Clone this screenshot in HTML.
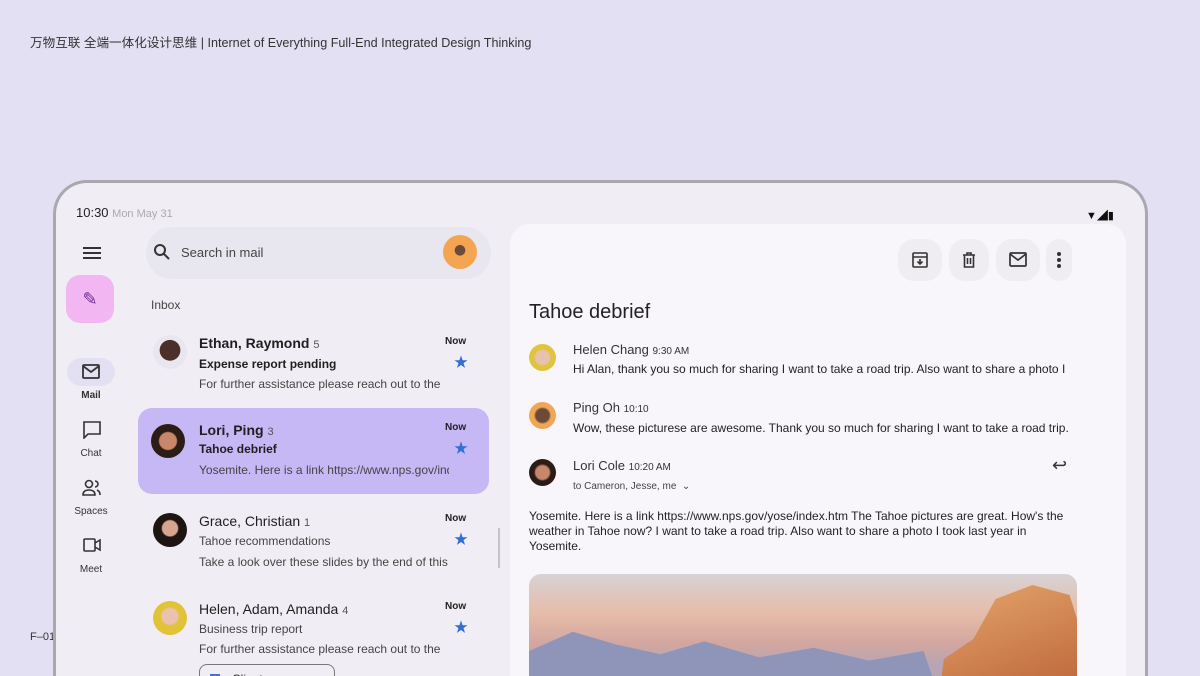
<!DOCTYPE html>
<html><head><meta charset="utf-8"><style>
*{margin:0;padding:0;box-sizing:border-box}
html{width:1200px;height:676px;overflow:hidden}
body{width:1200px;height:676px;overflow:hidden;background:#e4e0f3;font-family:"Liberation Sans","Noto Sans CJK SC",sans-serif;position:relative;color:#1f1f1f}
.a{position:absolute}
.hdr{left:30px;top:32px;font-size:12.6px;color:#333}
.dev{left:53px;top:180px;width:1095px;height:496px;border:3px solid #a9a7b0;border-bottom:0;border-radius:34px 34px 0 0;background:#f0eef4;overflow:hidden}
.t{font-size:13px}
.nav{font-size:10px;color:#333;text-align:center;width:50px}
.item .n{font-size:14px;font-weight:bold}
.av{border-radius:50%}
.sm{font-size:12px;color:#444}
.star{color:#2f6fd6;font-size:14px}
</style></head><body>
<div class="a hdr">万物互联 全端一体化设计思维 | Internet of Everything Full-End Integrated Design Thinking</div>
<div class="a" style="left:30px;top:631px;font-size:11px;color:#333">F–01</div>
<div class="a dev">
 <div class="a t" style="left:20px;top:22px;font-size:13px;color:#222">10:30 <span style="color:#aaa;font-size:11px">Mon May 31</span></div>
 <div class="a" style="left:1030px;top:24px;font-size:11px;color:#111">▼◢▮</div>
 <div class="a" style="left:27px;top:64px;width:18px;height:2px;background:#333;box-shadow:0 5px 0 #333,0 10px 0 #333"></div>
 <div class="a" style="left:10px;top:92px;width:48px;height:48px;border-radius:14px;background:#f2b6f3;text-align:center;line-height:48px;font-size:18px;color:#6a2d8a">✎</div>
 <div class="a" style="left:11px;top:175px;width:48px;height:28px;border-radius:14px;background:#e3e0f3"></div>
 <svg class="a" style="left:26px;top:181px" width="18" height="16" viewBox="0 0 18 16"><rect x="1" y="1" width="16" height="13" rx="1" fill="none" stroke="#333" stroke-width="1.8"/><path d="M1 2l8 6 8-6" fill="none" stroke="#333" stroke-width="1.8"/></svg>
 <div class="a nav" style="left:10px;top:207px;font-weight:bold">Mail</div>
 <svg class="a" style="left:27px;top:238px" width="18" height="18"><path d="M1 1h16v12H5l-4 4z" fill="none" stroke="#333" stroke-width="1.6"/></svg>
 <div class="a nav" style="left:10px;top:265px">Chat</div>
 <svg class="a" style="left:26px;top:296px" width="20" height="18"><circle cx="7" cy="5" r="3.5" fill="none" stroke="#333" stroke-width="1.6"/><path d="M1 16c0-4 3-5 6-5s6 1 6 5zM13 2a3 3 0 010 6M15 11c2 1 3 2 3 5" fill="none" stroke="#333" stroke-width="1.6"/></svg>
 <div class="a nav" style="left:10px;top:323px">Spaces</div>
 <svg class="a" style="left:27px;top:355px" width="18" height="14"><rect x="1" y="1" width="11" height="12" rx="1" fill="none" stroke="#333" stroke-width="1.6"/><path d="M12 5l5-3v10l-5-3" fill="none" stroke="#333" stroke-width="1.6"/></svg>
 <div class="a nav" style="left:10px;top:381px">Meet</div>
 <div class="a" style="left:90px;top:44px;width:345px;height:52px;border-radius:26px;background:#e8e6ee"></div>
 <svg class="a" style="left:97px;top:60px" width="18" height="18"><circle cx="7" cy="7" r="5" fill="none" stroke="#333" stroke-width="2"/><path d="M11 11l5 5" stroke="#333" stroke-width="2"/></svg>
 <div class="a t" style="left:125px;top:62px;color:#444">Search in mail</div>
 <div class="a av" style="left:387px;top:52px;width:34px;height:34px;background:radial-gradient(circle at 50% 45%,#6b4a3a 20%,#f3a552 22%)"></div>
 <div class="a" style="left:95px;top:115px;font-size:12px;color:#444">Inbox</div>
 <div class="a item" style="left:0;top:142px;width:440px;height:80px">
  <div class="a av" style="left:97px;top:10px;width:34px;height:34px;background:radial-gradient(circle at 50% 45%,#4a3028 40%,#e8e6ee 42%)"></div>
  <div class="a n" style="left:143px;top:10px">Ethan, Raymond <span style="font-weight:normal;font-size:11px;color:#555">5</span></div>
  <div class="a" style="left:143px;top:32px;font-size:12px;font-weight:bold">Expense report pending</div>
  <div class="a sm" style="left:143px;top:52px">For further assistance please reach out to the</div>
  <div class="a" style="left:389px;top:11px;font-size:10px;font-weight:bold">Now</div>
  <div class="a star" style="left:398px;top:27px">★</div>
 </div>
 <div class="a item" style="left:82px;top:225px;width:351px;height:86px;border-radius:14px;background:#c6b7f5">
  <div class="a av" style="left:13px;top:16px;width:34px;height:34px;background:radial-gradient(circle at 50% 50%,#c8876a 35%,#2b1c16 40%)"></div>
  <div class="a n" style="left:61px;top:14px">Lori, Ping <span style="font-weight:normal;font-size:11px;color:#555">3</span></div>
  <div class="a" style="left:61px;top:34px;font-size:12px;font-weight:bold">Tahoe debrief</div>
  <div class="a sm" style="left:61px;top:55px;width:250px;white-space:nowrap;overflow:hidden">Yosemite. Here is a link https://www.nps.gov/index</div>
  <div class="a" style="left:307px;top:14px;font-size:10px;font-weight:bold">Now</div>
  <div class="a star" style="left:316px;top:30px">★</div>
 </div>
 <div class="a item" style="left:0;top:320px;width:440px;height:80px">
  <div class="a av" style="left:97px;top:10px;width:34px;height:34px;background:radial-gradient(circle at 50% 45%,#d6a58e 30%,#1e1512 35%)"></div>
  <div class="a" style="left:143px;top:10px;font-size:14px">Grace, Christian <span style="font-size:11px;color:#555">1</span></div>
  <div class="a sm" style="left:143px;top:31px">Tahoe recommendations</div>
  <div class="a sm" style="left:143px;top:52px;width:250px;white-space:nowrap;overflow:hidden">Take a look over these slides by the end of this</div>
  <div class="a" style="left:389px;top:10px;font-size:10px;font-weight:bold">Now</div>
  <div class="a star" style="left:398px;top:26px">★</div>
 </div>
 <div class="a" style="left:442px;top:345px;width:2px;height:40px;background:#c4c2ca"></div>
 <div class="a item" style="left:0;top:408px;width:440px;height:100px">
  <div class="a av" style="left:97px;top:10px;width:34px;height:34px;background:radial-gradient(circle at 50% 45%,#e9c3b0 30%,#e2c236 38%)"></div>
  <div class="a" style="left:143px;top:10px;font-size:14px">Helen, Adam, Amanda <span style="font-size:11px;color:#555">4</span></div>
  <div class="a sm" style="left:143px;top:31px">Business trip report</div>
  <div class="a sm" style="left:143px;top:51px">For further assistance please reach out to the</div>
  <div class="a" style="left:389px;top:10px;font-size:10px;font-weight:bold">Now</div>
  <div class="a star" style="left:398px;top:26px">★</div>
  <div class="a" style="left:143px;top:73px;width:136px;height:30px;border:1px solid #777;border-radius:8px;font-size:12px;padding:7px 0 0 32px;color:#333">Client resource</div>
  <div class="a" style="left:154px;top:83px;width:10px;height:13px;background:#4a6fd4"></div>
  <div class="a" style="left:292px;top:83px;font-size:11px;color:#555">+</div>
 </div>
 <div class="a" style="left:454px;top:41px;width:616px;height:540px;border-radius:20px;background:#f8f6fb">
  <div class="a" style="left:388px;top:15px;width:44px;height:42px;border-radius:16px;background:#efedf2"></div>
  <div class="a" style="left:439px;top:15px;width:40px;height:42px;border-radius:16px;background:#efedf2"></div>
  <div class="a" style="left:486px;top:15px;width:44px;height:42px;border-radius:16px;background:#efedf2"></div>
  <div class="a" style="left:536px;top:15px;width:26px;height:42px;border-radius:13px;background:#efedf2"></div>
  <svg class="a" style="left:401px;top:27px" width="18" height="18"><rect x="2" y="2" width="14" height="14" rx="1" fill="none" stroke="#333" stroke-width="1.6"/><path d="M2 6h14M9 8v5M6.5 10.5L9 13l2.5-2.5" fill="none" stroke="#333" stroke-width="1.6"/></svg>
  <svg class="a" style="left:450px;top:27px" width="18" height="18"><path d="M3 4h12M7 4V2h4v2M4.5 4v12h9V4M7.5 7v6M10.5 7v6" fill="none" stroke="#333" stroke-width="1.6"/></svg>
  <svg class="a" style="left:499px;top:28px" width="18" height="16"><rect x="1" y="1" width="16" height="13" rx="1" fill="none" stroke="#333" stroke-width="1.7"/><path d="M1 2l8 6 8-6" fill="none" stroke="#333" stroke-width="1.7"/></svg>
  <div class="a" style="left:547px;top:28px;width:4px;height:4px;border-radius:2px;background:#333;box-shadow:0 6px 0 #333,0 12px 0 #333"></div>
  <div class="a" style="left:19px;top:77px;font-size:20px;color:#222">Tahoe debrief</div>
  <div class="a av" style="left:19px;top:120px;width:27px;height:27px;background:radial-gradient(circle at 50% 50%,#e8c2ae 35%,#e0c43e 45%)"></div>
  <div class="a" style="left:63px;top:118px;font-size:13px;color:#333">Helen Chang <span style="font-size:10px">9:30 AM</span></div>
  <div class="a sm" style="left:63px;top:138px;color:#222">Hi Alan, thank you so much for sharing I want to take a road trip. Also want to share a photo I</div>
  <div class="a av" style="left:19px;top:178px;width:27px;height:27px;background:radial-gradient(circle at 50% 50%,#6b4a3a 35%,#f0a655 45%)"></div>
  <div class="a" style="left:63px;top:176px;font-size:13px;color:#333">Ping Oh <span style="font-size:10px">10:10</span></div>
  <div class="a sm" style="left:63px;top:197px;color:#222">Wow, these picturese are awesome. Thank you so much for sharing I want to take a road trip.</div>
  <div class="a av" style="left:19px;top:235px;width:27px;height:27px;background:radial-gradient(circle at 50% 50%,#c8876a 35%,#2b1c16 45%)"></div>
  <div class="a" style="left:63px;top:234px;font-size:13px;color:#333">Lori Cole <span style="font-size:10px">10:20 AM</span></div>
  <div class="a" style="left:63px;top:257px;font-size:10px;color:#444">to Cameron, Jesse, me &nbsp;⌄</div>
  <div class="a" style="left:542px;top:231px;font-size:18px;color:#333">↩</div>
  <div class="a sm" style="left:19px;top:285px;width:550px;line-height:15px;color:#222">Yosemite. Here is a link https://www.nps.gov/yose/index.htm The Tahoe pictures are great. How's the weather in Tahoe now? I want to take a road trip. Also want to share a photo I took last year in Yosemite.</div>
  <div class="a" style="left:19px;top:350px;width:548px;height:200px;border-radius:12px;overflow:hidden;background:linear-gradient(180deg,#d7d2d6 0%,#e6bca8 20%,#d2a6a0 35%,#b8a5b3 45%)">
   <div class="a" style="left:0;top:45px;width:548px;height:160px;background:#8f95b8;clip-path:polygon(0 20%,8% 8%,16% 16%,24% 22%,32% 14%,42% 24%,52% 18%,62% 26%,72% 20%,80% 100%,0 100%)"></div>
   <div class="a" style="left:0;top:75px;width:548px;height:130px;background:#6e7494;clip-path:polygon(0 40%,12% 30%,22% 45%,35% 35%,50% 48%,65% 38%,78% 50%,80% 100%,0 100%)"></div>
   <div class="a" style="left:400px;top:5px;width:148px;height:200px;background:linear-gradient(160deg,#e8a96e,#c06c3f 60%,#8a4c35);clip-path:polygon(10% 40%,30% 30%,45% 10%,70% 3%,95% 8%,100% 20%,100% 100%,0 100%)"></div>
   <div class="a" style="left:0;top:145px;width:548px;height:60px;background:#cfcfd6;clip-path:polygon(0 40%,8% 20%,14% 30%,20% 15%,26% 35%,30% 100%,0 100%)"></div>
  </div>
 </div>
</div>
</body></html>
